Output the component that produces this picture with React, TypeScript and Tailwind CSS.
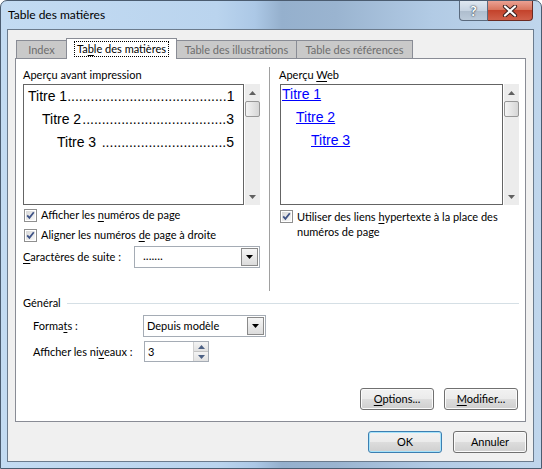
import React from "react";

const ui = "font-['Lato','Noto_Sans',sans-serif] text-[11px] leading-[16px] text-black whitespace-nowrap";
const arial = "font-['Liberation_Sans',Arial,sans-serif]";

function U({ children }: { children: React.ReactNode }) {
  return <span className="underline underline-offset-[2px]">{children}</span>;
}

function CheckBox() {
  return (
    <svg width="13" height="13" viewBox="0 0 13 13" className="shrink-0">
      <defs>
        <linearGradient id="cbg" x1="0" y1="0" x2="1" y2="1">
          <stop offset="0" stopColor="#d8d8d8" />
          <stop offset="1" stopColor="#f8f8f8" />
        </linearGradient>
      </defs>
      <rect x="0.5" y="0.5" width="12" height="12" fill="#fff" stroke="#8f8f8f" />
      <rect x="2" y="2" width="9" height="9" fill="url(#cbg)" />
      <path d="M3.2 6.4 L5.4 8.8 L9.8 3.2" fill="none" stroke="#3f5386" strokeWidth="1.8" />
    </svg>
  );
}

function DropButton() {
  return (
    <div className="w-[17px] self-stretch m-px flex items-center justify-center border border-[#8a8a8a] bg-gradient-to-b from-[#f6f6f6] to-[#dcdcdc]">
      <svg width="7" height="4" viewBox="0 0 7 4">
        <path d="M0 0 H7 L3.5 4 Z" fill="#000" />
      </svg>
    </div>
  );
}

function Scrollbar() {
  return (
    <div className="w-[16px] h-full flex flex-col items-center bg-[#ececec] border-l border-white">
      <div className="h-[17px] flex items-center justify-center">
        <svg width="7" height="4" viewBox="0 0 7 4">
          <path d="M0 4 L3.5 0 L7 4 Z" fill="#606060" />
        </svg>
      </div>
      <div className="w-[15px] h-[16px] rounded-[2px] border border-[#979797] bg-gradient-to-r from-[#f4f4f4] to-[#d6d6d6]" />
      <div className="flex-1" />
      <div className="h-[17px] flex items-center justify-center">
        <svg width="7" height="4" viewBox="0 0 7 4">
          <path d="M0 0 H7 L3.5 4 Z" fill="#606060" />
        </svg>
      </div>
    </div>
  );
}

function TocLine({ title, page, indent, n }: { title: string; page: string; indent: string; n: number }) {
  return (
    <div className={`flex items-baseline h-[23px] ${indent} pr-[9px] ${arial} text-[14px] leading-[19px] text-black`}>
      <span>{title}</span>
      <span className="flex-1 text-right">{".".repeat(n)}</span>
      <span>{page}</span>
    </div>
  );
}

function WebLine({ title, indent }: { title: string; indent: string }) {
  return (
    <div className={`h-[23px] ${indent} ${arial} text-[14px] leading-[19px]`}>
      <span className="text-[#0000ff] underline">{title}</span>
    </div>
  );
}

function Button({ children, def }: { children: React.ReactNode; def?: boolean }) {
  return (
    <div
      className={`w-[74px] h-[22px] flex items-center justify-center rounded-[3px] border ${
        def
          ? "border-[#3c7fb1] shadow-[inset_0_0_0_1px_#a6e3fb]"
          : "border-[#707070] shadow-[inset_0_0_0_1px_#fbfbfb]"
      } bg-[linear-gradient(#f2f2f2_0%,#ebebeb_50%,#dddddd_51%,#cfcfcf_100%)]`}
    >
      {children}
    </div>
  );
}

function Tab({ label, w }: { label: string; w: string }) {
  return (
    <div
      className={`${w} h-[18px] flex items-center justify-center border border-b-0 border-[#898c95] bg-[#c9c9c9] text-[#6d6d6d] -mr-px`}
    >
      {label}
    </div>
  );
}

export default function App() {
  return (
    <div className={`${ui} w-[542px] h-[469px] overflow-hidden`}>
      <div className="w-full h-full flex flex-col rounded-t-[7px] border border-[#4b5c70] bg-[linear-gradient(90deg,#c3dbf2_0%,#bad4ee_40%,#acc8e6_47%,#95b0cd_52%,#9ab4d0_62%,#b2cbe5_80%,#c0d6ec_100%)]">
        {/* title bar */}
        <div className="h-[28px] flex items-start shrink-0">
          <div className="pl-[7px] pt-[6px] text-black text-[12px]">Table des matières</div>
          <div className="flex-1" />
          <div className="flex mr-[8px]">
            <div className="w-[29px] h-[20px] flex items-center justify-center rounded-bl-[4px] border border-t-0 border-[#5a6a7e] bg-[linear-gradient(#dfe8f1_0%,#c7d4e2_50%,#aebdcd_51%,#bccbda_100%)] text-white font-bold text-[14px] [text-shadow:0_0_2px_#2c3a4a,0_0_1px_#2c3a4a]">
              ?
            </div>
            <div className="w-[45px] h-[20px] flex items-center justify-center rounded-br-[4px] border border-l-0 border-t-0 border-[#6b2a22] bg-[linear-gradient(#eba193_0%,#d9765f_45%,#c4432c_50%,#d0604a_100%)]">
              <svg width="16" height="12" viewBox="0 0 16 12">
                <path d="M3 1.5 L13 10.5 M13 1.5 L3 10.5" stroke="#3a2020" strokeWidth="4.2" strokeLinecap="round" />
                <path d="M3 1.5 L13 10.5 M13 1.5 L3 10.5" stroke="#fff" strokeWidth="2.2" strokeLinecap="round" />
              </svg>
            </div>
          </div>
        </div>

        {/* client area */}
        <div className="ml-[6px] mr-[7px] mb-[7px] flex-1 border border-[#6b7b8d] bg-[#f0f0f0] flex flex-col pt-[7px] pl-[7px] pr-[7px] pb-[8px]">
          {/* tabs */}
          <div className="flex items-end h-[21px] pl-px relative z-10">
            <Tab label="Index" w="w-[51px]" />
            <div className="w-[111px] h-[21px] -mb-px flex items-center justify-center border border-b-0 border-[#898c95] bg-white -mr-px">
              <span className="px-[2px] leading-[14px] outline outline-1 outline-dotted outline-black">
                Ta<U>b</U>le des matières
              </span>
            </div>
            <Tab label="Table des illustrations" w="w-[121px]" />
            <Tab label="Table des références" w="w-[117px]" />
          </div>

          {/* panel */}
          <div className="h-[364px] border border-[#898c95] bg-white flex flex-col pl-[7px] pr-[6px]">
            <div className="h-[232px] pt-[8px] flex shrink-0">
              {/* left */}
              <div className="w-[237px] flex flex-col">
                <div>Aperçu avant impression</div>
                <div className="mt-px h-[121px] flex">
                  <div className="w-[221px] h-full border border-[#646464] pt-[2px] pl-[4px]">
                    <TocLine title="Titre 1" page="1" indent="pl-0" n={41} />
                    <TocLine title="Titre 2" page="3" indent="pl-[14px]" n={37} />
                    <TocLine title="Titre 3" page="5" indent="pl-[29px]" n={32} />
                  </div>
                  <Scrollbar />
                </div>
                <div className="h-[20px] flex items-center gap-[4px] pl-px">
                  <CheckBox />
                  <span>
                    Afficher les <U>n</U>uméros de page
                  </span>
                </div>
                <div className="h-[20px] flex items-center gap-[4px] pl-px">
                  <CheckBox />
                  <span>
                    Aligner les numéros <U>d</U>e page à droite
                  </span>
                </div>
                <div className="h-[22px] mt-px flex items-center">
                  <span className="w-[111px]">
                    <U>C</U>aractères de suite :
                  </span>
                  <div className="flex-1 h-full flex items-center border border-[#a5acb5] bg-white">
                    <span className="flex-1 pl-[8px] -mt-[3px] text-[12px]">.......</span>
                    <DropButton />
                  </div>
                </div>
              </div>

              <div className="ml-[9px] mr-[9px] w-px self-stretch bg-[#a0a0a0]" />

              {/* right */}
              <div className="flex-1 flex flex-col">
                <div>
                  Aperçu <U>W</U>eb
                </div>
                <div className="mt-px h-[121px] flex ml-px">
                  <div className="flex-1 h-full border border-[#646464] pl-[1px]">
                    <WebLine title="Titre 1" indent="pl-0" />
                    <WebLine title="Titre 2" indent="pl-[14px]" />
                    <WebLine title="Titre 3" indent="pl-[29px]" />
                  </div>
                  <Scrollbar />
                </div>
                <div className="mt-[4px] flex items-start gap-[4px] pl-px">
                  <div className="pt-[1px]">
                    <CheckBox />
                  </div>
                  <span className="leading-[15px]">
                    Utiliser des liens <U>h</U>ypertexte à la place des
                    <br />
                    numéros de page
                  </span>
                </div>
              </div>
            </div>

            {/* Général */}
            <div className="mt-[4px] h-[16px] flex items-center">
              <span>Général</span>
              <div className="flex-1 ml-[6px] h-px bg-[#d5dfe5]" />
            </div>
            <div className="mt-[4px] h-[22px] flex items-center pl-[10px]">
              <span className="w-[110px]">
                Forma<U>t</U>s :
              </span>
              <div className="w-[123px] h-full flex items-center border border-[#a5acb5] bg-white">
                <span className="flex-1 pl-[3px]">Depuis modèle</span>
                <DropButton />
              </div>
            </div>
            <div className="mt-[4px] h-[21px] flex items-center pl-[10px]">
              <span className="w-[111px]">
                Afficher les ni<U>v</U>eaux :
              </span>
              <div className="w-[65px] h-full flex items-center border border-[#a5acb5] bg-white">
                <span className="flex-1 pl-[3px]">3</span>
                <div className="w-[15px] h-full flex flex-col border-l border-[#d0d0d0]">
                  <div className="flex-1 flex items-center justify-center bg-gradient-to-b from-[#f4f4f4] to-[#e2e2e2] border-b border-[#c4c4c4]">
                    <svg width="7" height="4" viewBox="0 0 7 4">
                      <path d="M0 4 L3.5 0 L7 4 Z" fill="#4d6185" />
                    </svg>
                  </div>
                  <div className="flex-1 flex items-center justify-center bg-gradient-to-b from-[#f4f4f4] to-[#e2e2e2]">
                    <svg width="7" height="4" viewBox="0 0 7 4">
                      <path d="M0 0 H7 L3.5 4 Z" fill="#4d6185" />
                    </svg>
                  </div>
                </div>
              </div>
            </div>

            <div className="mt-[26px] flex justify-end gap-[10px] pr-[1px]">
              <Button>
                <span>
                  <U>O</U>ptions...
                </span>
              </Button>
              <Button>
                <span>
                  <U>M</U>odifier...
                </span>
              </Button>
            </div>
          </div>

          {/* bottom buttons */}
          <div className="mt-[9px] flex justify-end gap-[11px] -mr-[1px]">
            <Button def>OK</Button>
            <Button>Annuler</Button>
          </div>
        </div>
      </div>
    </div>
  );
}
